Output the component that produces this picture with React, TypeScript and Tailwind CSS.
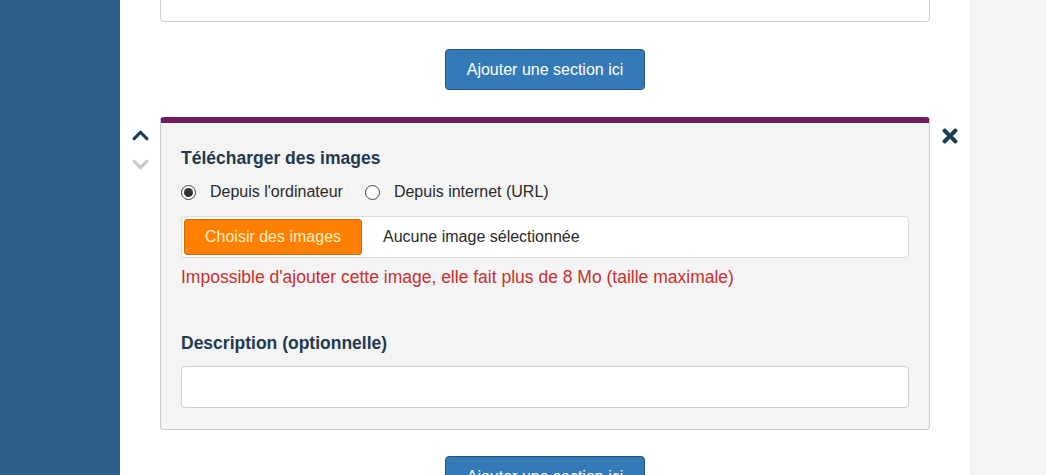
import React from "react";
import { FaChevronUp, FaChevronDown, FaTimes } from "react-icons/fa";

function AddSectionButton() {
  return (
    <div className="flex justify-center">
      <button className="h-[41px] px-[21px] rounded-[4px] bg-[#337ab7] border border-[#22557f] text-white text-[16px]">
        Ajouter une section ici
      </button>
    </div>
  );
}

function Radio({ checked, label }: { checked?: boolean; label: string }) {
  return (
    <label className="flex items-center">
      <span className="w-[15px] h-[15px] rounded-full border border-[#444] bg-white flex items-center justify-center">
        {checked && <span className="w-[9px] h-[9px] rounded-full bg-[#333]" />}
      </span>
      <span className="ml-[14px]">{label}</span>
    </label>
  );
}

export default function App() {
  return (
    <div
      className="flex h-[475px] w-full overflow-hidden text-[16px] text-[#2a2a2a]"
      style={{ fontFamily: '"Liberation Sans", Arial, sans-serif' }}
    >
      {/* sidebar */}
      <div className="w-[120px] shrink-0 bg-[#2e6189]" />

      {/* main column */}
      <div className="w-[850px] shrink-0 bg-white px-[40px]">
        <div className="mt-[-20px] h-[42px] bg-white border border-[#ccc] rounded-[4px]" />

        <div className="mt-[27px]">
          <AddSectionButton />
        </div>

        {/* section row */}
        <div className="mt-[27px] -mx-[40px] flex">
          <div className="w-[40px] shrink-0 flex flex-col items-center pt-[9px]">
            <FaChevronUp className="text-[#1d3c55]" size={19} />
            <FaChevronDown className="text-[#c8c8c8] mt-[10px]" size={19} />
          </div>

          <div className="flex-1 border border-[#ccc] border-t-[6px] border-t-[#6b1f5e] rounded-[4px] bg-[#f4f4f4] px-[20px] pt-[24px] pb-[21px]">
            <div className="font-bold text-[17.5px] leading-[22px] text-[#1f3a50]">
              Télécharger des images
            </div>

            <div className="mt-[13px] h-[20px] flex items-center gap-[22px]">
              <Radio checked label="Depuis l'ordinateur" />
              <Radio label="Depuis internet (URL)" />
            </div>

            <div className="mt-[14px] h-[42px] bg-white border border-[#dcdcdc] rounded-[4px] p-[2px] flex items-center">
              <button className="h-[36px] w-[178px] bg-[#ff8000] border border-[#d96c00] rounded-[3px] text-[#ffeec6]">
                Choisir des images
              </button>
              <span className="ml-[21px]">Aucune image sélectionnée</span>
            </div>

            <div className="mt-[9px] text-[17.5px] leading-[20px] text-[#c9302c]">
              Impossible d'ajouter cette image, elle fait plus de 8 Mo (taille maximale)
            </div>

            <div className="mt-[45px] font-bold text-[17.5px] leading-[22px] text-[#1f3a50]">
              Description (optionnelle)
            </div>

            <div className="mt-[12px] h-[42px] bg-white border border-[#ccc] rounded-[4px]" />
          </div>

          <div className="w-[40px] shrink-0 flex justify-center pt-[8px]">
            <FaTimes className="text-[#1d3c55]" size={22} />
          </div>
        </div>

        <div className="mt-[26px]">
          <AddSectionButton />
        </div>
      </div>

      {/* right gutter */}
      <div className="flex-1 bg-[#f4f4f4] border-l border-[#ececec]" />
    </div>
  );
}
